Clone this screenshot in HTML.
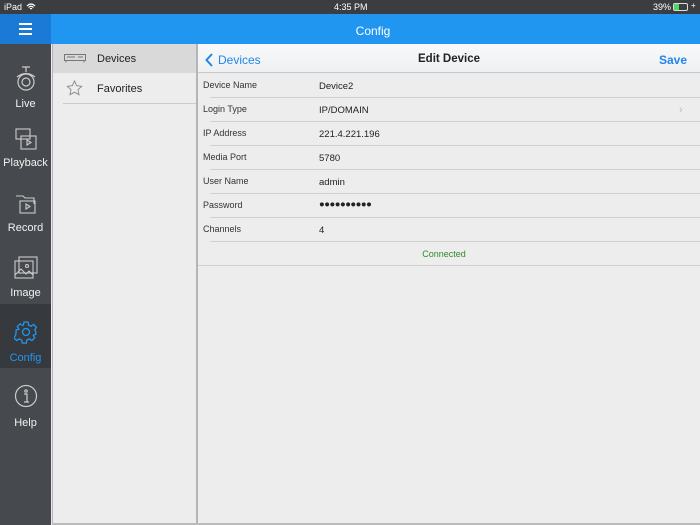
<!DOCTYPE html>
<html><head><meta charset="utf-8"><style>
*{margin:0;padding:0;box-sizing:border-box}
body{width:700px;height:525px;overflow:hidden;background:#ececec;font-family:"Liberation Sans",sans-serif;position:relative}
.abs{position:absolute}
#status{left:0;top:0;width:700px;height:14px;background:#3b3d40;color:#fff;font-size:9px}
#top{left:0;top:14px;width:700px;height:30px;background:#2196f0}
#ham{left:0;top:14px;width:51px;height:30px;background:#1a7ad6}
#side{left:0;top:44px;width:51px;height:481px;background:#46494d}
.si{position:absolute;left:0;width:51px;text-align:center;color:#f2f2f2;font-size:11px}
#mid{left:52px;top:44px;width:144px;height:479px;background:#ededed;border-left:1px solid #b5b5b5}
#right{left:196px;top:44px;width:504px;height:479px;background:#ededed;border-left:2px solid #b5b5b5}
.row{position:absolute;left:0;width:502px;height:24px;font-size:9px;color:#333}
.row .l{position:absolute;left:5px;top:6px}
.row .v{position:absolute;left:121px;top:7px;font-size:9.5px;color:#222}
.row .ln{position:absolute;left:12px;right:0;bottom:0;height:1px;background:#d0d0d0}
</style></head><body>
<div id="status" class="abs"><span class="abs" style="left:4px;top:2px">iPad</span>
<svg class="abs" style="left:26px;top:3px" width="10" height="8" viewBox="0 0 10 8"><path d="M1 3Q5 -1 9 3M2.5 4.5Q5 2 7.5 4.5M4 6Q5 5 6 6" stroke="#fff" stroke-width="1.2" fill="none"/></svg>
<span class="abs" style="left:334px;top:2px">4:35 PM</span>
<span class="abs" style="left:653px;top:2px">39%</span>
<div class="abs" style="left:673px;top:3px;width:15px;height:8px;border:1px solid #ddd;border-radius:2px"><div style="width:5px;height:6px;background:#4cd964"></div></div>
<span class="abs" style="left:691px;top:1px;font-size:8px">+</span></div>
<div id="top" class="abs"></div>
<div id="ham" class="abs"><div class="abs" style="left:19px;top:9px;width:13px;height:2px;background:#fff"></div><div class="abs" style="left:19px;top:14px;width:13px;height:2px;background:#fff"></div><div class="abs" style="left:19px;top:19px;width:13px;height:2px;background:#fff"></div></div>
<div class="abs" style="left:0;top:24px;width:746px;text-align:center;color:#fff;font-size:12px">Config</div>
<div id="side" class="abs">
<div class="abs" style="left:0;top:260px;width:51px;height:64px;background:#36393d"></div>
<svg class="abs" style="left:13px;top:21px" width="26" height="28" viewBox="0 0 26 28" fill="none" stroke="#ccc" stroke-width="1.2"><path d="M13 2v5M9 2h8"/><path d="M4 12Q13 5 22 12"/><circle cx="13" cy="17" r="8"/><circle cx="13" cy="17" r="4"/></svg>
<div class="si" style="top:54px">Live</div>
<svg class="abs" style="left:14px;top:83px" width="24" height="24" viewBox="0 0 24 24" fill="none" stroke="#ccc" stroke-width="1.1"><rect x="2" y="2" width="14" height="10"/><rect x="7" y="9" width="15" height="13"/><path d="M13 13l4 2.5-4 2.5z"/></svg>
<div class="si" style="top:113px">Playback</div>
<svg class="abs" style="left:14px;top:148px" width="24" height="24" viewBox="0 0 24 24" fill="none" stroke="#ccc" stroke-width="1.1"><path d="M2 4h7l2 2h9v6"/><rect x="6" y="9" width="15" height="12"/><path d="M12 12l4 2.5-4 2.5z"/></svg>
<div class="si" style="top:178px">Record</div>
<svg class="abs" style="left:13px;top:211px" width="26" height="26" viewBox="0 0 26 26" fill="none" stroke="#ccc" stroke-width="1.1"><rect x="6" y="2" width="18" height="16"/><rect x="2" y="6" width="18" height="17"/><path d="M2 20l6-6 5 5 3-3 4 4"/><circle cx="14" cy="11" r="1.5"/></svg>
<div class="si" style="top:243px">Image</div>
<svg class="abs" style="left:14px;top:276px" width="24" height="24" viewBox="0 0 24 24" fill="none" stroke="#2196f0" stroke-width="1.3"><path d="M10 2h4l.6 3 2.4 1.2 2.6-1.7 2.8 2.8-1.7 2.6L21.9 12l-.2 2.4-2.8.8.1 0 1.7 2.6-2.8 2.8-2.6-1.7-2.4 1.2-.6 3h-4l-.6-3-2.4-1.2-2.6 1.7-2.8-2.8 1.7-2.6L2.1 12l.1-2.2 2.8-.6-1.7-2.6 2.8-2.8 2.6 1.7L9.4 5z"/><circle cx="12" cy="12" r="3.5"/></svg>
<div class="si" style="top:308px;color:#2196f0">Config</div>
<svg class="abs" style="left:14px;top:340px" width="24" height="24" viewBox="0 0 24 24" fill="none" stroke="#ccc" stroke-width="1.2"><circle cx="12" cy="12" r="10.5"/><circle cx="12" cy="7" r="1.2"/><path d="M10 10h3v8M10 18h5"/></svg>
<div class="si" style="top:373px">Help</div>
</div>
<div id="mid" class="abs">
<div class="abs" style="left:0;top:0;width:143px;height:29px;background:#d9d9d9"></div>
<svg class="abs" style="left:11px;top:10px" width="22" height="9" viewBox="0 0 22 9" fill="none" stroke="#777" stroke-width="1"><rect x="0.5" y="0.5" width="21" height="6"/><path d="M3 3h8M14 3h5M2 7v1.5M20 7v1.5"/></svg>
<div class="abs" style="left:44px;top:9px;font-size:11px;color:#222">Devices</div>
<svg class="abs" style="left:13px;top:36px" width="17" height="16" viewBox="0 0 17 16" fill="none" stroke="#888" stroke-width="0.9"><path d="M8.5 1l2.2 4.7 5 .6-3.7 3.4 1 5-4.5-2.5-4.5 2.5 1-5L1.3 6.3l5-.6z"/></svg>
<div class="abs" style="left:44px;top:39px;font-size:11px;color:#222">Favorites</div>
<div class="abs" style="left:10px;top:59px;width:133px;height:1px;background:#ccc"></div>
</div>
<div id="right" class="abs">
<div class="abs" style="left:0;top:0;width:502px;height:29px;background:linear-gradient(#f7f9fb,#eef0f2);border-bottom:1px solid #c8c8c8"></div>
<svg class="abs" style="left:7px;top:9px" width="8" height="14" viewBox="0 0 8 14"><path d="M7 1L1.5 7 7 13" stroke="#2186e8" stroke-width="2" fill="none"/></svg>
<div class="abs" style="left:20px;top:9px;font-size:12px;color:#2186e8">Devices</div>
<div class="abs" style="left:0;top:9px;width:502px;text-align:center;font-size:11.5px;font-weight:bold;color:#222">Edit Device</div>
<div class="abs" style="left:461px;top:9px;font-size:12px;font-weight:bold;color:#2186e8">Save</div>
<div class="row" style="top:30px"><span class="l">Device Name</span><span class="v">Device2</span><div class="ln"></div></div>
<div class="row" style="top:54px"><span class="l">Login Type</span><span class="v">IP/DOMAIN</span><span class="abs" style="left:481px;top:6px;color:#bbb;font-size:11px">&#8250;</span><div class="ln"></div></div>
<div class="row" style="top:78px"><span class="l">IP Address</span><span class="v">221.4.221.196</span><div class="ln"></div></div>
<div class="row" style="top:102px"><span class="l">Media Port</span><span class="v">5780</span><div class="ln"></div></div>
<div class="row" style="top:126px"><span class="l">User Name</span><span class="v">admin</span><div class="ln"></div></div>
<div class="row" style="top:150px"><span class="l">Password</span><span class="v" style="top:5px;letter-spacing:-0.5px">●●●●●●●●●●</span><div class="ln"></div></div>
<div class="row" style="top:174px"><span class="l">Channels</span><span class="v">4</span><div class="ln"></div></div>
<div class="row" style="top:198px"><span class="abs" style="left:0;width:492px;top:7px;text-align:center;color:#2e8b2e">Connected</span><div class="ln" style="left:0"></div></div>
</div>
<div class="abs" style="left:52px;top:523px;width:648px;height:2px;background:#bbb"></div>
</body></html>
